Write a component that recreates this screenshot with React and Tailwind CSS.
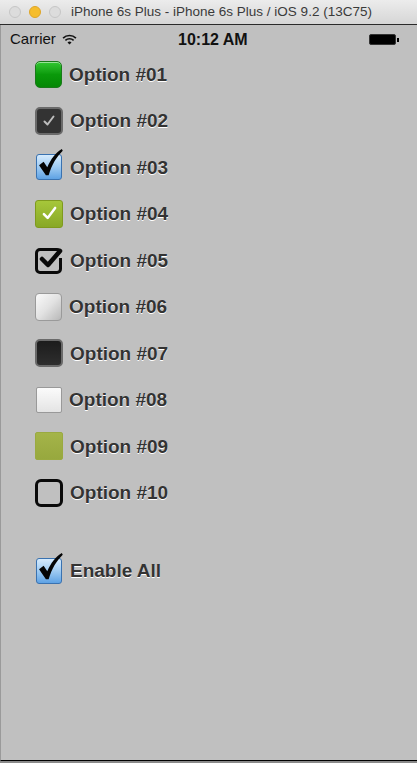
import React from 'react';

const Check = ({ color = '#111', className = '' }) => (
  <svg viewBox="0 0 24 24" className={className}>
    <path d="M3 13 L9 19 L21 3" fill="none" stroke={color} strokeWidth="4" strokeLinecap="round" strokeLinejoin="round" />
  </svg>
);

const BigCheck = () => (
  <svg viewBox="0 0 30 34" className="absolute left-[1px] top-[-5px] w-[28px] h-[31px]">
    <path d="M3 19 L8 15 L12 21 C16 12 21 5 28 1 L29 3 C22 10 17 18 13.5 30 L10.5 30 Z" fill="#050505" />
  </svg>
);

function Box({ kind }) {
  switch (kind) {
    case 1:
      return <div className="w-[27px] h-[27px] rounded-[5px] border border-[#1a7a1a] bg-gradient-to-b from-[#30c830] via-[#0a9a0a] to-[#068806] shadow-[inset_0_1px_0_rgba(255,255,255,0.5)]" />;
    case 2:
      return (
        <div className="w-[28px] h-[28px] rounded-[5px] border-2 border-[#6a6a6a] bg-[#333] flex items-center justify-center">
          <Check color="#bdbdbd" className="w-[12px] h-[12px]" />
        </div>
      );
    case 3:
      return (
        <div className="relative w-[28px] h-[28px]">
          <div className="absolute left-[1px] top-[1px] w-[26px] h-[26px] rounded-[3px] border border-[#3a72b0] bg-gradient-to-b from-[#d6ebfd] via-[#9fcbf2] to-[#5ea2e4]" />
          <BigCheck />
        </div>
      );
    case 4:
      return (
        <div className="w-[28px] h-[28px] rounded-[3px] border border-[#7f9a1e] bg-gradient-to-b from-[#a6c73a] to-[#88a826] flex items-center justify-center">
          <Check color="#fff" className="w-[15px] h-[15px]" />
        </div>
      );
    case 5:
      return (
        <div className="relative w-[28px] h-[28px]">
          <div className="absolute left-0 top-[2px] w-[27px] h-[26px] rounded-[5px] border-[3px] border-[#0a0a0a]" />
          <div className="absolute right-[-2px] top-[4px] w-[7px] h-[8px] bg-[#c0c0c0]" />
          <svg viewBox="0 0 28 28" className="absolute left-0 top-0 w-[28px] h-[28px]">
            <path d="M7 13 L13 19 L25 5" fill="none" stroke="#0a0a0a" strokeWidth="4.5" strokeLinecap="round" strokeLinejoin="round" />
          </svg>
        </div>
      );
    case 6:
      return <div className="w-[27px] h-[28px] rounded-[4px] border border-[#9a9a9a] bg-gradient-to-br from-[#fafafa] via-[#e2e2e2] to-[#b8b8b8]" />;
    case 7:
      return <div className="w-[28px] h-[28px] rounded-[5px] border-2 border-[#6a6a6a] bg-gradient-to-b from-[#1c1c1c] to-[#2e2e2e]" />;
    case 8:
      return <div className="w-[26px] h-[26px] ml-[1px] rounded-[2px] border border-[#999] bg-gradient-to-b from-[#fbfbfb] to-[#e4e4e4]" />;
    case 9:
      return <div className="w-[28px] h-[28px] rounded-[2px] bg-gradient-to-b from-[#a4b449] to-[#97a83e] border border-[#9aaa40]" />;
    case 10:
      return <div className="w-[28px] h-[28px] rounded-[6px] border-[3px] border-[#0a0a0a]" />;
    default:
      return null;
  }
}

function Row({ kind, label }) {
  return (
    <div className="flex items-center h-[28px]">
      <Box kind={kind} />
      <span className="ml-[7px] text-[19px] font-bold text-[#333] [text-shadow:0_1px_0_#fff] leading-none">{label}</span>
    </div>
  );
}

export default function App() {
  const options = [1, 2, 3, 4, 5, 6, 7, 8, 9, 10];

  return (
    <div className="w-[417px] h-[763px] bg-[#c0c0c0] flex flex-col font-['Liberation_Sans',Arial,sans-serif] overflow-hidden">
      {/* window title bar */}
      <div className="h-[25px] shrink-0 bg-gradient-to-b from-[#ececec] to-[#d6d6d6] border-b border-[#2a2a2a] flex items-center">
        <div className="flex items-center gap-[8px] pl-[9px]">
          <span className="w-[12px] h-[12px] rounded-full bg-[#dcdcdc] border border-[#c6c6c6]" />
          <span className="w-[12px] h-[12px] rounded-full bg-[#f5bd2d] border border-[#dea528]" />
          <span className="w-[12px] h-[12px] rounded-full bg-[#dcdcdc] border border-[#c6c6c6]" />
        </div>
        <span className="ml-[10px] text-[13.5px] text-[#3a3a3a]">
          iPhone 6s Plus - iPhone 6s Plus / iOS 9.2 (13C75)
        </span>
      </div>

      <div className="flex-1 flex flex-col border-l border-[#9a9a9a] border-b border-b-black">
        {/* status bar */}
        <div className="relative h-[28px] flex items-center px-[9px] pt-[1px]">
          <span className="text-[15px] text-[#111]">Carrier</span>
          <svg viewBox="0 0 16 12" className="ml-[6px] w-[15px] h-[11px]">
            <path d="M1 4.5 A10 10 0 0 1 15 4.5" fill="none" stroke="#111" strokeWidth="1.8" />
            <path d="M3.5 7 A6.5 6.5 0 0 1 12.5 7" fill="none" stroke="#111" strokeWidth="1.8" />
            <path d="M8 11.5 L5.8 9.2 A3.2 3.2 0 0 1 10.2 9.2 Z" fill="#111" />
          </svg>
          <span className="absolute left-[177px] text-[16px] font-bold text-[#111]">10:12 AM</span>
          <div className="ml-auto mr-[9px] flex items-center">
            <div className="w-[27px] h-[11px] rounded-[2px] bg-black border border-[#333]" />
            <div className="w-[2px] h-[4px] bg-black ml-[1px]" />
          </div>
        </div>

        {/* options */}
        <div className="flex flex-col gap-[18.5px] pl-[34px] pt-[7px]">
          {options.map((n) => (
            <Row key={n} kind={n} label={`Option #${String(n).padStart(2, '0')}`} />
          ))}
        </div>

        <div className="pl-[34px] mt-[50px]">
          <Row kind={3} label="Enable All" />
        </div>
      </div>
      <div className="h-[2px] shrink-0 bg-[#8a8a8a]" />
    </div>
  );
}
